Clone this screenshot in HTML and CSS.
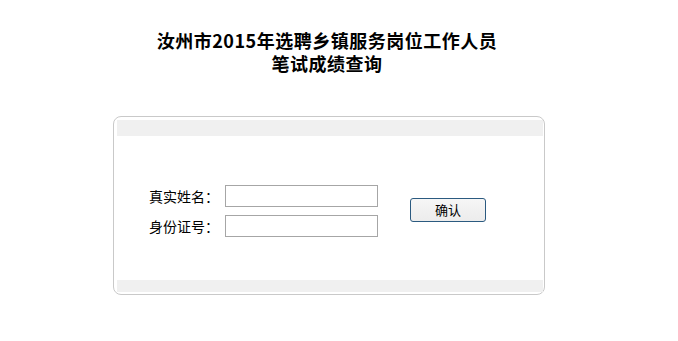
FILE: index.html
```html
<!DOCTYPE html>
<html lang="zh-CN">
<head>
<meta charset="utf-8">
<title>笔试成绩查询</title>
<link rel="stylesheet" href="styles.css">
</head>
<body>
<div class="wrap">
  <h1 class="title"><span class="tline">汝州市2015年选聘乡镇服务岗位工作人员</span><span class="tline">笔试成绩查询</span></h1>
  <div class="panel">
    <div class="band band-top"></div>
    <form class="body" onsubmit="return false;">
      <div class="fields">
        <label class="row"><span class="lbl">真实姓名：</span><input class="inp" type="text"></label>
        <label class="row"><span class="lbl">身份证号：</span><input class="inp" type="text"></label>
      </div>
      <button class="btn" type="submit">确认</button>
    </form>
    <div class="band band-bottom"></div>
  </div>
</div>
</body>
</html>
```
FILE: styles.css
```css
html, body {
  margin: 0;
  padding: 0;
  background: #fff;
}
body {
  font-family: "Noto Sans CJK SC", "Liberation Sans", sans-serif;
  color: #000;
}
.wrap {
  width: 432px;
  margin-left: 113px;
  padding-top: 29px;
}
.title {
  margin: 0 0 0 -4px;
  font-size: 18px;
  font-weight: bold;
  text-align: center;
  letter-spacing: 0.5px;
}
.tline {
  display: block;
  height: 23px;
  line-height: 23px;
  overflow: visible;
}
.panel {
  margin-top: 41px;
  border: 1px solid #c9c9c9;
  border-radius: 8px;
  padding: 3px 1px 2px 3px;
}
.band {
  background: #f0f0f0;
}
.band-top { height: 16px; }
.band-bottom { height: 12px; }
.body {
  margin: 0;
  height: 144px;
  box-sizing: border-box;
  padding: 49px 0 0 32px;
  display: flex;
  align-items: flex-start;
}
.fields {
  display: flex;
  flex-direction: column;
  gap: 8px;
}
.row {
  display: flex;
  align-items: center;
  height: 22px;
}
.lbl {
  width: 76px;
  font-size: 14px;
  line-height: 22px;
  white-space: nowrap;
}
.inp {
  width: 153px;
  height: 22px;
  box-sizing: border-box;
  border: 1px solid #a6a6a6;
  margin: 0;
  padding: 0 3px;
  font-size: 13px;
  background: #fff;
  outline: none;
}
.btn {
  margin: 13px 0 0 32px;
  width: 76px;
  height: 24px;
  box-sizing: border-box;
  border: 1px solid #2b5a80;
  border-radius: 3px;
  background: linear-gradient(#f6f6f6, #ececec);
  font-family: "Noto Sans CJK SC", sans-serif;
  font-size: 13px;
  line-height: 20px;
  padding: 0;
  color: #000;
}
```
